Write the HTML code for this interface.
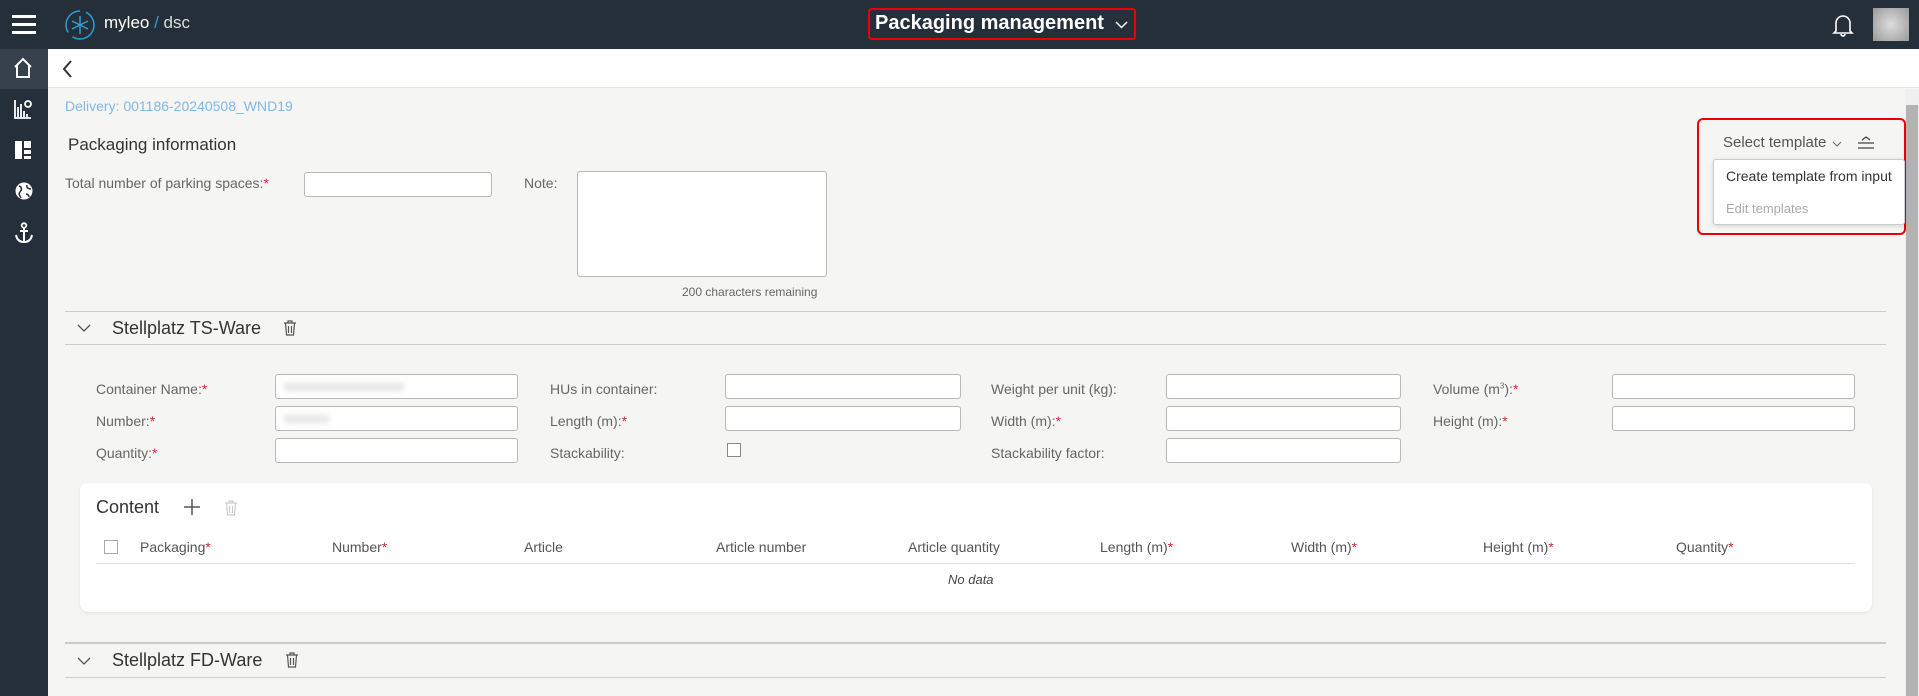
<!DOCTYPE html>
<html><head><meta charset="utf-8"><style>
*{box-sizing:border-box;margin:0;padding:0}
body{width:1919px;height:696px;overflow:hidden;background:#f5f5f4;font-family:"Liberation Sans",sans-serif;color:#555;position:relative;font-size:14px}
.a{position:absolute;white-space:nowrap}
.hdr{left:0;top:0;width:1919px;height:49px;background:#252f3a}
.side{left:0;top:49px;width:48px;height:647px;background:#252f3a}
.inp{position:absolute;background:#fff;border:1px solid #b8b8b8;border-radius:3px;height:25px}
.lbl{position:absolute;font-size:14px;color:#666;white-space:nowrap}
.r{color:#d0283a}
.th{position:absolute;font-size:14px;color:#555;white-space:nowrap;top:539px}
.line{position:absolute;height:1px;background:#ccc}
</style></head><body>
<div class="a hdr"></div>
<div class="a" style="left:12px;top:15px;width:24px;height:3px;background:#fff"></div>
<div class="a" style="left:12px;top:23px;width:24px;height:3px;background:#fff"></div>
<div class="a" style="left:12px;top:31px;width:24px;height:3px;background:#fff"></div>
<svg class="a" style="left:64px;top:9px" width="32" height="32" viewBox="0 0 32 32"><circle cx="16" cy="16" r="14" fill="none" stroke="#2a9fd8" stroke-width="1.5" stroke-dasharray="30 6"/><path d="M16 7v18M8 12l16 8M8 20l16-8" stroke="#2a9fd8" stroke-width="1.5"/></svg>
<div class="a" style="left:104px;top:13px;color:#fff;font-size:17px">myleo<span style="color:#2a9fd8"> / </span><span style="color:#ddd">dsc</span></div>
<div class="a" style="left:868px;top:8px;width:268px;height:32px;border:2px solid #e00;border-radius:4px"></div>
<div class="a" style="left:875px;top:12px;color:#fff;font-size:20px;font-weight:bold">Packaging management</div>
<svg class="a" style="left:1115px;top:21px" width="13" height="8" viewBox="0 0 13 8"><path d="M1 1l5.5 5.5L12 1" fill="none" stroke="#fff" stroke-width="1.5"/></svg>
<svg class="a" style="left:1832px;top:13px" width="22" height="24" viewBox="0 0 22 24"><path d="M4 18V10a7 7 0 0 1 14 0v8l2 2H2z M9 21a2 2 0 0 0 4 0" fill="none" stroke="#fff" stroke-width="1.6"/></svg>
<div class="a" style="left:1873px;top:8px;width:36px;height:33px;background:radial-gradient(circle,#ddd,#999)"></div>

<div class="a side"></div>
<div class="a" style="left:0;top:49px;width:48px;height:40px;background:#36414d"></div>
<svg class="a" style="left:13px;top:57px" width="20" height="22" viewBox="0 0 20 22"><path d="M2 10L10 2l8 8M4 8v12h12V8" fill="none" stroke="#fff" stroke-width="2"/></svg>
<svg class="a" style="left:14px;top:99px" width="18" height="20" viewBox="0 0 18 20"><path d="M1 1v18h16M4 18V8M7 18V5M10 18v-6M13 18v-3" stroke="#fff" stroke-width="1.8" fill="none"/><circle cx="14" cy="5" r="3" fill="none" stroke="#fff" stroke-width="1.8"/></svg>
<svg class="a" style="left:15px;top:141px" width="16" height="18" viewBox="0 0 16 18"><path d="M0 0h7v18H0zM9 0h7v7H9zM9 9h7v4H9zM9 15h7v3H9z" fill="#fff"/></svg>
<svg class="a" style="left:14px;top:181px" width="20" height="20" viewBox="0 0 20 20"><circle cx="10" cy="10" r="8.5" fill="#fff"/><path d="M5 5c3 1 3 4 1 6s0 4 1 6M13 4c-1 3 2 4 4 4M12 13c2 0 3 2 3 3" stroke="#252f3a" stroke-width="1.5" fill="none"/></svg>
<svg class="a" style="left:14px;top:222px" width="20" height="22" viewBox="0 0 20 22"><circle cx="10" cy="3.5" r="2.3" fill="none" stroke="#fff" stroke-width="1.8"/><path d="M10 6v14M6 9h8M2 13c1 5 4 7 8 7s7-2 8-7" stroke="#fff" stroke-width="2" fill="none"/></svg>

<div class="a" style="left:48px;top:49px;width:1871px;height:39px;background:#fff;border-bottom:1px solid #e5e5e5"></div>
<svg class="a" style="left:62px;top:60px" width="12" height="18" viewBox="0 0 12 18"><path d="M9 1L2 9l7 8" fill="none" stroke="#333" stroke-width="2"/></svg>

<div class="a" style="left:1905px;top:89px;width:14px;height:607px;background:#f0f0f0"></div>
<div class="a" style="left:1906px;top:105px;width:12px;height:591px;background:#b3b3b3"></div>

<div class="a" style="left:65px;top:98px;color:#7fb7e6;font-size:14px">Delivery: 001186-20240508_WND19</div>
<div class="a" style="left:68px;top:135px;color:#333;font-size:17px">Packaging information</div>
<div class="lbl" style="left:65px;top:175px">Total number of parking spaces:<span class="r">*</span></div>
<div class="inp" style="left:304px;top:172px;width:188px"></div>
<div class="lbl" style="left:524px;top:175px">Note:</div>
<div class="inp" style="left:577px;top:171px;width:250px;height:106px"></div>
<div class="a" style="left:682px;top:285px;font-size:12px;color:#666">200 characters remaining</div>

<div class="a" style="left:1697px;top:118px;width:209px;height:117px;border:2px solid #e00;border-radius:6px"></div>
<div class="a" style="left:1723px;top:134px;font-size:15px;color:#555">Select template</div>
<svg class="a" style="left:1832px;top:141px" width="10" height="6" viewBox="0 0 10 6"><path d="M1 1l4 4 4-4" fill="none" stroke="#666" stroke-width="1"/></svg>
<svg class="a" style="left:1857px;top:136px" width="18" height="14" viewBox="0 0 18 14"><path d="M1 7h16M1 12h16M5 4l4-3 4 3" stroke="#444" stroke-width="1.3" fill="none"/></svg>
<div class="a" style="left:1713px;top:159px;width:192px;height:66px;background:#fff;border:1px solid #ccc;border-radius:3px;box-shadow:0 1px 4px rgba(0,0,0,.15)"></div>
<div class="a" style="left:1726px;top:168px;font-size:14px;color:#333">Create template from input</div>
<div class="a" style="left:1726px;top:201px;font-size:13px;color:#aaa">Edit templates</div>

<div class="line" style="left:65px;top:311px;width:1821px"></div>
<svg class="a" style="left:77px;top:324px" width="14" height="9" viewBox="0 0 14 9"><path d="M1 1l6 6 6-6" fill="none" stroke="#555" stroke-width="1.3"/></svg>
<div class="a" style="left:112px;top:318px;font-size:18px;color:#333">Stellplatz TS-Ware</div>
<svg class="a" style="left:283px;top:320px" width="14" height="16" viewBox="0 0 14 16"><path d="M1 3h12M5 3V1h4v2M2.5 3l1 12h7l1-12M5.5 6v7M8.5 6v7" stroke="#555" stroke-width="1.2" fill="none"/></svg>
<div class="line" style="left:65px;top:344px;width:1821px"></div>

<div class="lbl" style="left:96px;top:381px">Container Name:<span class="r">*</span></div>
<div class="inp" style="left:275px;top:374px;width:243px"><div style="margin:8px 8px;width:120px;height:8px;background:#e6e6e6;filter:blur(3px)"></div></div>
<div class="lbl" style="left:96px;top:413px">Number:<span class="r">*</span></div>
<div class="inp" style="left:275px;top:406px;width:243px"><div style="margin:8px 8px;width:45px;height:8px;background:#e6e6e6;filter:blur(3px)"></div></div>
<div class="lbl" style="left:96px;top:445px">Quantity:<span class="r">*</span></div>
<div class="inp" style="left:275px;top:438px;width:243px"></div>

<div class="lbl" style="left:550px;top:381px">HUs in container:</div>
<div class="inp" style="left:725px;top:374px;width:236px"></div>
<div class="lbl" style="left:550px;top:413px">Length (m):<span class="r">*</span></div>
<div class="inp" style="left:725px;top:406px;width:236px"></div>
<div class="lbl" style="left:550px;top:445px">Stackability:</div>
<div class="a" style="left:727px;top:443px;width:14px;height:14px;border:1px solid #888;background:#fff"></div>

<div class="lbl" style="left:991px;top:381px">Weight per unit (kg):</div>
<div class="inp" style="left:1166px;top:374px;width:235px"></div>
<div class="lbl" style="left:991px;top:413px">Width (m):<span class="r">*</span></div>
<div class="inp" style="left:1166px;top:406px;width:235px"></div>
<div class="lbl" style="left:991px;top:445px">Stackability factor:</div>
<div class="inp" style="left:1166px;top:438px;width:235px"></div>

<div class="lbl" style="left:1433px;top:381px">Volume (m<sup style="font-size:8px">3</sup>):<span class="r">*</span></div>
<div class="inp" style="left:1612px;top:374px;width:243px"></div>
<div class="lbl" style="left:1433px;top:413px">Height (m):<span class="r">*</span></div>
<div class="inp" style="left:1612px;top:406px;width:243px"></div>

<div class="a" style="left:80px;top:483px;width:1792px;height:129px;background:#fff;border-radius:8px;box-shadow:0 1px 3px rgba(0,0,0,.08)"></div>
<div class="a" style="left:96px;top:497px;font-size:18px;color:#333">Content</div>
<svg class="a" style="left:183px;top:498px" width="18" height="18" viewBox="0 0 18 18"><path d="M9 1v16M1 9h16" stroke="#555" stroke-width="1.5"/></svg>
<svg class="a" style="left:224px;top:500px" width="14" height="16" viewBox="0 0 14 16"><path d="M1 3h12M5 3V1h4v2M2.5 3l1 12h7l1-12M5.5 6v7M8.5 6v7" stroke="#ccc" stroke-width="1.2" fill="none"/></svg>
<div class="a" style="left:104px;top:540px;width:14px;height:14px;border:1.5px solid #aaa;background:#fff"></div>
<div class="th" style="left:140px">Packaging<span class="r">*</span></div>
<div class="th" style="left:332px">Number<span class="r">*</span></div>
<div class="th" style="left:524px">Article</div>
<div class="th" style="left:716px">Article number</div>
<div class="th" style="left:908px">Article quantity</div>
<div class="th" style="left:1100px">Length (m)<span class="r">*</span></div>
<div class="th" style="left:1291px">Width (m)<span class="r">*</span></div>
<div class="th" style="left:1483px">Height (m)<span class="r">*</span></div>
<div class="th" style="left:1676px">Quantity<span class="r">*</span></div>
<div class="line" style="left:96px;top:563px;width:1759px;background:#e0e0e0"></div>
<div class="a" style="left:948px;top:572px;font-size:13px;font-style:italic;color:#444">No data</div>

<div class="line" style="left:65px;top:642px;width:1821px;height:2px;background:#ccc"></div>
<svg class="a" style="left:77px;top:657px" width="14" height="9" viewBox="0 0 14 9"><path d="M1 1l6 6 6-6" fill="none" stroke="#555" stroke-width="1.3"/></svg>
<div class="a" style="left:112px;top:650px;font-size:18px;color:#333">Stellplatz FD-Ware</div>
<svg class="a" style="left:285px;top:652px" width="14" height="16" viewBox="0 0 14 16"><path d="M1 3h12M5 3V1h4v2M2.5 3l1 12h7l1-12M5.5 6v7M8.5 6v7" stroke="#555" stroke-width="1.2" fill="none"/></svg>
<div class="line" style="left:65px;top:677px;width:1821px"></div>
</body></html>
